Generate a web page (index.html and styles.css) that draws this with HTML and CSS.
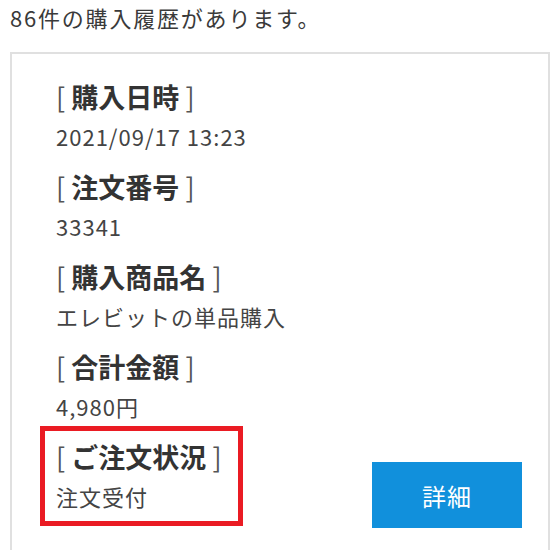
FILE: index.html
```html
<!DOCTYPE html>
<html lang="ja">
<head>
<meta charset="utf-8">
<title>購入履歴</title>
<link rel="stylesheet" href="styles.css">
</head>
<body>
<p class="count">86件の購入履歴があります。</p>
<section class="card">
  <div class="item">
    <h3 class="label"><span class="br">[</span> 購入日時 <span class="br">]</span></h3>
    <p class="value">2021/09/17 13:23</p>
  </div>
  <div class="item">
    <h3 class="label"><span class="br">[</span> 注文番号 <span class="br">]</span></h3>
    <p class="value">33341</p>
  </div>
  <div class="item">
    <h3 class="label"><span class="br">[</span> 購入商品名 <span class="br">]</span></h3>
    <p class="value">エレビットの単品購入</p>
  </div>
  <div class="item">
    <h3 class="label"><span class="br">[</span> 合計金額 <span class="br">]</span></h3>
    <p class="value">4,980円</p>
  </div>
  <div class="last-row">
    <div class="item status">
      <h3 class="label"><span class="br">[</span> ご注文状況 <span class="br">]</span></h3>
      <p class="value">注文受付</p>
    </div>
    <a class="detail-btn" href="#">詳細</a>
  </div>
</section>
</body>
</html>
```

FILE: styles.css
```css
html, body {
  margin: 0;
  padding: 0;
  background: #fff;
  overflow: hidden;
}
body {
  padding: 0 10px;
  font-family: "Noto Sans CJK JP", "Noto Sans", sans-serif;
  color: #333;
}
.count {
  margin: 0;
  font-size: 22px;
  line-height: 34px;
  letter-spacing: 1.8px;
  color: #3a3a3a;
}
.card {
  margin-top: 18px;
  border: 2px solid #e0e0e0;
  padding: 24px 26px 40px 44px;
  display: flex;
  flex-direction: column;
  gap: 12px;
}
.item {
  display: flex;
  flex-direction: column;
}
.label {
  margin: 0;
  font-size: 27px;
  line-height: 38px;
  font-weight: 700;
  color: #333;
}
.br {
  font-weight: 400;
  color: #555;
}
.value {
  margin: 0;
  font-size: 22px;
  line-height: 40px;
  letter-spacing: 1px;
  color: #444;
}
.last-row {
  display: flex;
  justify-content: space-between;
  align-items: flex-end;
}
.status {
  box-sizing: border-box;
  width: 203px;
  margin: -12px 0 0 -16px;
  border: 5px solid #ea1b23;
  padding: 7px 0 5px 11px;
}
.detail-btn {
  display: flex;
  align-items: center;
  justify-content: center;
  width: 150px;
  height: 66px;
  margin-bottom: -2px;
  background: #1190dc;
  color: #fff;
  font-size: 24px;
  text-decoration: none;
  letter-spacing: 1px;
}
```
